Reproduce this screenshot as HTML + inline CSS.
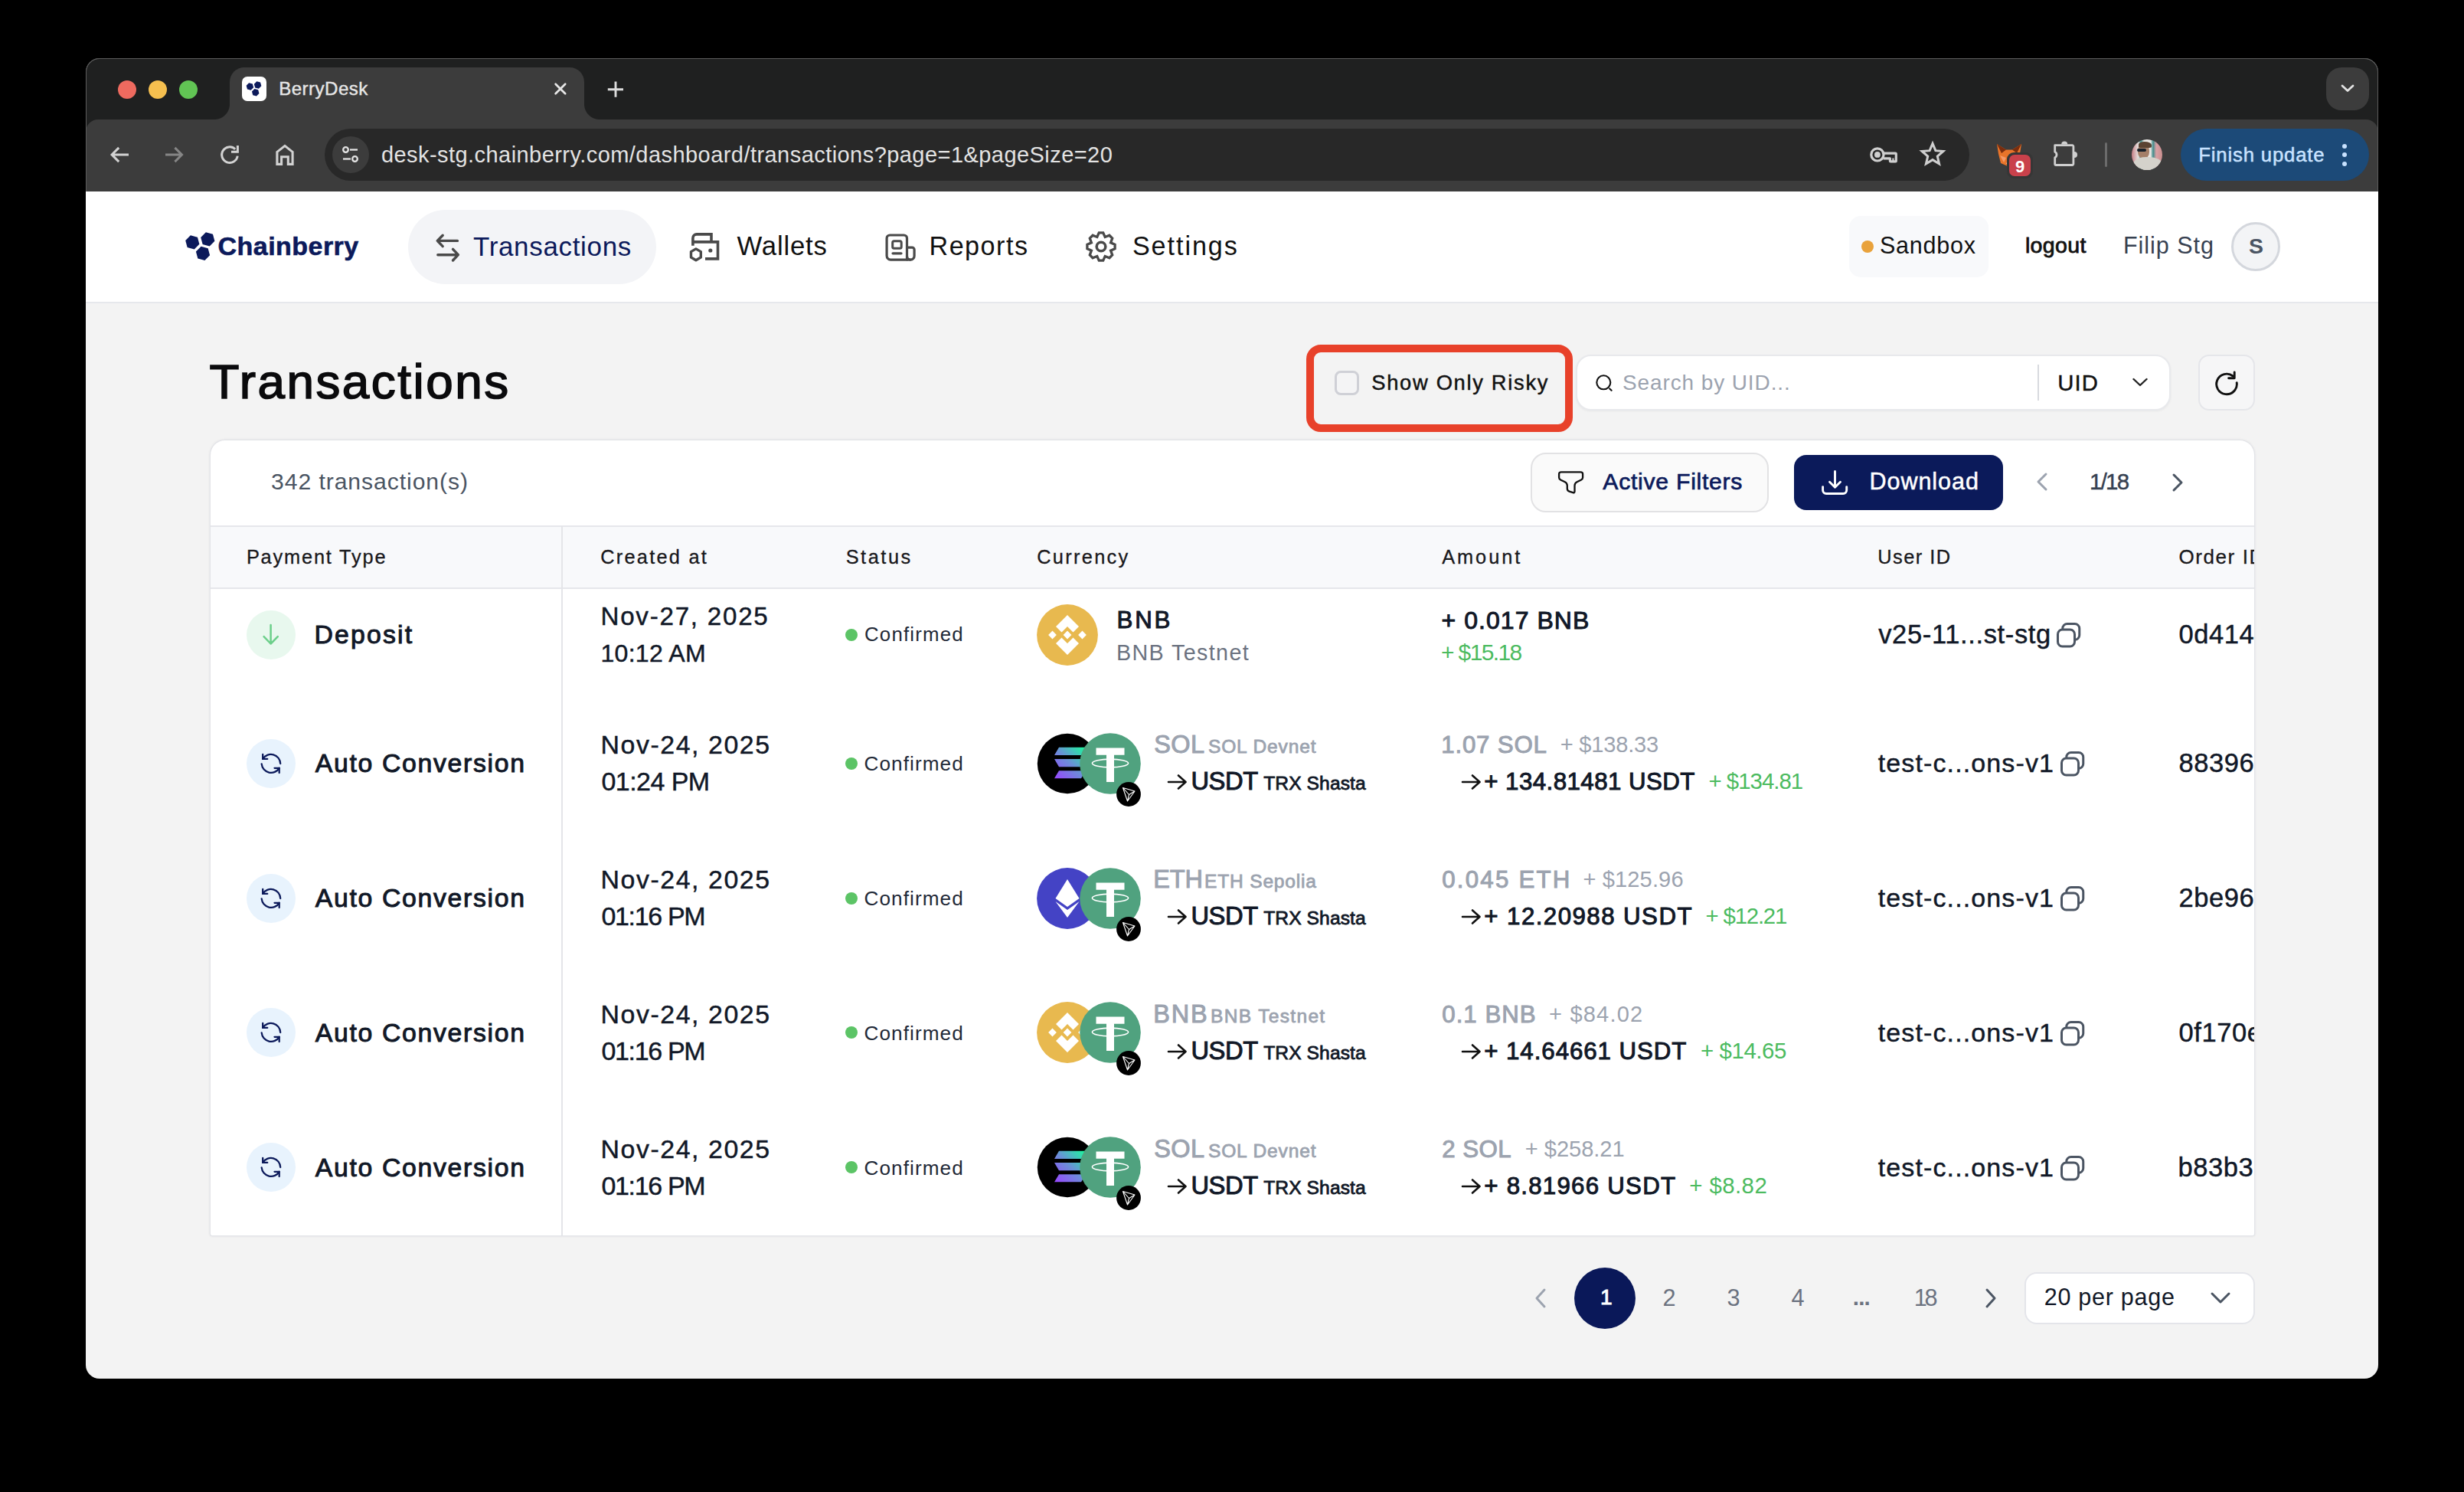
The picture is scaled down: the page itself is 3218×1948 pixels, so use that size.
<!DOCTYPE html>
<html><head><meta charset="utf-8">
<style>
html,body{margin:0;padding:0;}
body{width:3218px;height:1948px;background:#000;position:relative;overflow:hidden;font-family:"Liberation Sans",sans-serif;}
.t{position:absolute;white-space:nowrap;line-height:1;font-family:"Liberation Sans",sans-serif;}
svg{overflow:visible}
</style></head><body>
<div style="position:absolute;left:112px;top:76px;width:2994px;height:114px;background:#1f2020;border-radius:18px 18px 0 0;box-shadow:inset 0 1px 0 #4a4a4a,inset 1px 0 0 #3a3a3a,inset -1px 0 0 #3a3a3a"></div>
<div style="position:absolute;left:112px;top:156px;width:2994px;height:104px;background:#3c3c3c;border-radius:16px 16px 0 0"></div>
<div style="position:absolute;left:112px;top:250px;width:2994px;height:1550px;background:#f3f3f3;border-radius:0 0 18px 18px"></div>
<div style="position:absolute;left:112px;top:76px;width:2994px;height:174px;border:1.2px solid #5c5c5c;border-bottom:none;border-radius:18px 18px 0 0;box-sizing:border-box"></div>
<div style="position:absolute;left:300px;top:88px;width:463px;height:82px;background:#3c3c3c;border-radius:19px 19px 0 0"></div>
<div style="position:absolute;left:280px;top:136px;width:20px;height:20px;background:radial-gradient(circle at 0 0,#1f2020 19.5px,#3c3c3c 20.5px)"></div>
<div style="position:absolute;left:763px;top:136px;width:20px;height:20px;background:radial-gradient(circle at 100% 0,#1f2020 19.5px,#3c3c3c 20.5px)"></div>
<div style="position:absolute;left:153.8px;top:104.8px;width:24.399999999999977px;height:24.39999999999999px;background:#ee6a5f;border-radius:50%"></div>
<div style="position:absolute;left:193.8px;top:104.8px;width:24.399999999999977px;height:24.39999999999999px;background:#f5bf4f;border-radius:50%"></div>
<div style="position:absolute;left:233.8px;top:104.8px;width:24.399999999999977px;height:24.39999999999999px;background:#61c454;border-radius:50%"></div>
<div style="position:absolute;left:316px;top:100px;width:32px;height:32px;background:#fff;border-radius:7px"></div>
<svg style="position:absolute;left:316px;top:100px;" width="32" height="32" viewBox="0 0 32 32"><polygon points="15.13,14.27 11.67,17.73 6.94,16.46 5.67,11.73 9.13,8.27 13.86,9.54" fill="#0c1a5b"/><polygon points="25.33,12.27 21.87,15.73 17.14,14.46 15.87,9.73 19.33,6.27 24.06,7.54" fill="#0c1a5b"/><polygon points="22.43,22.07 18.97,25.53 14.24,24.26 12.97,19.53 16.43,16.07 21.16,17.34" fill="#0c1a5b"/></svg>
<svg style="position:absolute;left:722px;top:106px;" width="20" height="20" viewBox="0 0 20 20"><path d="M3.6 3.7 L16.2 16.3 M16.2 3.7 L3.6 16.3" stroke="#e6e6e6" stroke-width="2.7" stroke-linecap="round"/></svg>
<svg style="position:absolute;left:793px;top:105.5px;" width="22" height="22" viewBox="0 0 22 22"><path d="M11 0.6 V20.8 M0.8 10.7 H21" stroke="#dcdcdc" stroke-width="2.9"/></svg>
<div style="position:absolute;left:3038px;top:88px;width:55.69999999999982px;height:55.80000000000001px;background:#3c3c3c;border-radius:20px"></div>
<svg style="position:absolute;left:3056px;top:108px;" width="20" height="14" viewBox="0 0 20 14"><path d="M3 4 L10 10.5 L17 4" stroke="#e3e3e3" stroke-width="2.8" fill="none" stroke-linecap="round" stroke-linejoin="round"/></svg>
<svg style="position:absolute;left:142px;top:188px;" width="28" height="28" viewBox="0 0 28 28"><path d="M4.6 14 H26 M13.2 4.9 L4.1 14 L13.2 23.1" stroke="#d2d2d2" stroke-width="3" fill="none" stroke-linecap="butt" stroke-linejoin="miter"/></svg>
<svg style="position:absolute;left:214px;top:188px;" width="28" height="28" viewBox="0 0 28 28"><path d="M2 14 H23.2 M14.4 4.9 L23.5 14 L14.4 23.1" stroke="#868686" stroke-width="3" fill="none" stroke-linecap="butt" stroke-linejoin="miter"/></svg>
<svg style="position:absolute;left:286px;top:188px;" width="28" height="28" viewBox="0 0 28 28"><path d="M21.2 6.8 A10.3 10.3 0 1 0 24.2 15.6" stroke="#d2d2d2" stroke-width="3" fill="none"/><path d="M24.4 1.9 V10.2 H16" stroke="#d2d2d2" stroke-width="3" fill="none"/></svg>
<svg style="position:absolute;left:358px;top:187px;" width="28" height="30" viewBox="0 0 28 30"><path d="M3.9 27.4 V11.4 L14 3.4 L24.1 11.4 V27.4 H18.3 V17.8 H9.6 V27.4 Z" stroke="#d2d2d2" stroke-width="3.1" fill="none" stroke-linejoin="miter"/></svg>
<div style="position:absolute;left:424px;top:168px;width:2148px;height:68px;background:#282828;border-radius:34px"></div>
<div style="position:absolute;left:434px;top:178px;width:48px;height:48px;background:#3c3c3c;border-radius:50%"></div>
<svg style="position:absolute;left:444px;top:188px;" width="28" height="28" viewBox="0 0 28 28"><circle cx="7.5" cy="7.5" r="3.3" stroke="#e3e3e3" stroke-width="2.3" fill="none"/><path d="M13 7.5 H23" stroke="#e3e3e3" stroke-width="2.3"/><circle cx="19.5" cy="19.5" r="3.3" stroke="#e3e3e3" stroke-width="2.3" fill="none"/><path d="M4 19.5 H14" stroke="#e3e3e3" stroke-width="2.3"/></svg>
<svg style="position:absolute;left:2440px;top:190px;" width="40" height="26" viewBox="0 0 40 26"><circle cx="11.9" cy="11.9" r="8.1" stroke="#cfcfcf" stroke-width="3.2" fill="none"/><circle cx="11.9" cy="11.9" r="3.9" fill="#cfcfcf"/><path d="M19.6 10.1 H35.4 Q36.3 10.1 36.3 11 V19.9 Q36.3 20.8 35.4 20.8 H29.3 Q28.4 20.8 28.4 19.9 V16.8 H19.6" stroke="#cfcfcf" stroke-width="3.2" fill="none" stroke-linejoin="round"/><path d="M32.4 16.5 V20" stroke="#cfcfcf" stroke-width="2.2"/></svg>
<svg style="position:absolute;left:2506px;top:184.6px;" width="36" height="34" viewBox="0 0 36 34"><polygon points="18.00,2.40 21.88,11.66 31.89,12.49 24.28,19.04 26.58,28.81 18.00,23.60 9.42,28.81 11.72,19.04 4.11,12.49 14.12,11.66" stroke="#cfcfcf" stroke-width="3" fill="none" stroke-linejoin="miter"/></svg>
<svg style="position:absolute;left:2606px;top:186px;" width="36" height="32" viewBox="0 0 36 32"><path d="M2 2 L14 9.5 L22 9.5 L34 2 L32 15 L29 27 L20 31 L16 31 L7 27 L4 15 Z" fill="#e8742a"/><path d="M2 2 L14 9.5 L8 14 Z M34 2 L22 9.5 L28 14 Z" fill="#7a2d0e"/><path d="M6 17 L14 20 L11 26 Z M30 17 L22 20 L25 26 Z" fill="#f59a6a"/><path d="M14 27 L18 31 L22 27 L18 25Z" fill="#e6e6e6"/></svg>
<div style="position:absolute;left:2621.4px;top:198.8px;width:33.59999999999991px;height:34.0px;background:#363636;border-radius:9px"></div>
<div style="position:absolute;left:2624.4px;top:201.8px;width:27.59999999999991px;height:28.0px;background:#c9414b;border-radius:7px"></div>
<svg style="position:absolute;left:2678px;top:180px;" width="40" height="40" viewBox="0 0 40 40"><path d="M5.7 9.7 H28.4 A1.5 1.5 0 0 1 29.9 11.2 V34 A1.5 1.5 0 0 1 28.4 35.5 H7.2 A1.5 1.5 0 0 1 5.7 34 V25.8 A4.3 4.3 0 0 0 5.7 18.2 Z" stroke="#cfcfcf" stroke-width="2.8" fill="none" stroke-linejoin="round"/><path d="M14.2 8.5 A4 4 0 0 1 22.2 8.5 Z" fill="#cfcfcf"/><path d="M31 18 A4 4 0 0 1 31 26 Z" fill="#cfcfcf"/></svg>
<div style="position:absolute;left:2748.5px;top:186px;width:3.0px;height:32px;background:#6b6b6b;border-radius:2px"></div>
<div style="position:absolute;left:2784px;top:182px;width:40px;height:40px;border-radius:50%;overflow:hidden;background:linear-gradient(90deg,#c77f86 0,#e8e4e2 22%,#3f8c8a 30%,#e9e6e3 40%,#e9e6e3 62%,#3f8c8a 70%,#d9a0a4 80%,#c98f8f 100%)"><div style="position:absolute;left:8px;top:6px;width:15px;height:19px;border-radius:45%;background:#a47f68"></div><div style="position:absolute;left:9px;top:3px;width:17px;height:8px;border-radius:50% 60% 20% 20%;background:#5b4332"></div><div style="position:absolute;left:7px;top:12px;width:12px;height:4px;border-radius:2px;background:#17202a"></div><div style="position:absolute;left:2px;top:23px;width:38px;height:20px;border-radius:45% 45% 0 0;background:#d4d2cb"></div></div>
<div style="position:absolute;left:2848px;top:168px;width:245.5px;height:67.5px;background:#1c4a78;border-radius:34px"></div>
<div style="position:absolute;left:3059px;top:187.6px;width:6px;height:6.0px;background:#c8e2ff;border-radius:50%"></div>
<div style="position:absolute;left:3059px;top:199.4px;width:6px;height:6.0px;background:#c8e2ff;border-radius:50%"></div>
<div style="position:absolute;left:3059px;top:211px;width:6px;height:6px;background:#c8e2ff;border-radius:50%"></div>
<div style="position:absolute;left:112px;top:250px;width:2994px;height:144px;background:#fff"></div>
<div style="position:absolute;left:112px;top:394px;width:2994px;height:2px;background:#e6e8ec"></div>
<svg style="position:absolute;left:238px;top:300px;" width="46" height="44" viewBox="0 0 46 44"><polygon points="22.38,18.83 15.73,25.48 6.65,23.05 4.22,13.97 10.87,7.32 19.95,9.75" fill="#0c1a5b"/><polygon points="42.38,14.83 35.73,21.48 26.65,19.05 24.22,9.97 30.87,3.32 39.95,5.75" fill="#0c1a5b"/><polygon points="36.08,33.33 29.43,39.98 20.35,37.55 17.92,28.47 24.57,21.82 33.65,24.25" fill="#0c1a5b"/></svg>
<div style="position:absolute;left:532.8px;top:274px;width:323.80000000000007px;height:97px;background:#f3f4f7;border-radius:49px"></div>
<svg style="position:absolute;left:566px;top:304px;" width="38" height="40" viewBox="0 0 38 40"><path d="M5.5 10.4 H31.5 M12.2 3.2 L5.2 10.4 L12.2 17.6" stroke="#4a4a4a" stroke-width="3.4" fill="none" stroke-linecap="round" stroke-linejoin="round"/><path d="M5.8 28.7 H32 M25.5 21.4 L32.4 28.7 L25.5 36" stroke="#4a4a4a" stroke-width="3.4" fill="none" stroke-linecap="round" stroke-linejoin="round"/></svg>
<svg style="position:absolute;left:895px;top:298px;" width="50" height="50" viewBox="0 0 50 50"><path d="M9.9 22.8 V12.9 A5 5 0 0 1 14.9 7.9 H34 V17.9" stroke="#4a4a4a" stroke-width="3.6" fill="none"/><path d="M9.9 17.9 H42.5 V39.9 H26" stroke="#4a4a4a" stroke-width="3.6" fill="none"/><circle cx="32.8" cy="29" r="2.6" fill="#4a4a4a"/><polygon points="13.90,26.90 20.31,30.60 20.31,38.00 13.90,41.70 7.49,38.00 7.49,30.60" stroke="#4a4a4a" stroke-width="3.4" fill="none" stroke-linejoin="round"/></svg>
<svg style="position:absolute;left:1150px;top:298px;" width="50" height="50" viewBox="0 0 50 50"><path d="M34.5 41.1 H13.1 A5 5 0 0 1 8.1 36.1 V13 A4 4 0 0 1 12.1 9 H30.5 A4 4 0 0 1 34.5 13 Z" stroke="#4a4a4a" stroke-width="3.2" fill="none" stroke-linejoin="round"/><path d="M34.5 25.1 H41.1 A3 3 0 0 1 44.1 28.1 V36.3 A4.8 4.8 0 0 1 39.3 41.1 A4.8 4.8 0 0 1 34.5 36.3" stroke="#4a4a4a" stroke-width="3.2" fill="none" stroke-linejoin="round"/><rect x="15.7" y="16.8" width="11.5" height="9.4" rx="2" stroke="#4a4a4a" stroke-width="3" fill="none"/><path d="M16 32.8 H27" stroke="#4a4a4a" stroke-width="3.2" stroke-linecap="round"/><path d="M34 41.1 H39.5" stroke="#4a4a4a" stroke-width="3.2"/></svg>
<svg style="position:absolute;left:1410px;top:295px;" width="60" height="55" viewBox="0 0 60 55"><polygon points="25.30,8.90 30.70,8.90 33.20,14.44 38.89,12.29 42.71,16.11 40.56,21.80 46.10,24.30 46.10,29.70 40.56,32.20 42.71,37.89 38.89,41.71 33.20,39.56 30.70,45.10 25.30,45.10 22.80,39.56 17.11,41.71 13.29,37.89 15.44,32.20 9.90,29.70 9.90,24.30 15.44,21.80 13.29,16.11 17.11,12.29 22.80,14.44" stroke="#4a4a4a" stroke-width="3.3" fill="none" stroke-linejoin="miter" stroke-miterlimit="3"/><circle cx="28" cy="27" r="5.8" stroke="#4a4a4a" stroke-width="3.6" fill="none"/></svg>
<div style="position:absolute;left:2415px;top:282px;width:182px;height:80px;background:#f8f9fb;border-radius:15px"></div>
<div style="position:absolute;left:2431px;top:314px;width:16px;height:16px;background:#e9a23b;border-radius:50%"></div>
<div style="position:absolute;left:2914px;top:290px;width:64px;height:64px;background:#f3f4f6;border:3px solid #d4d7dd;border-radius:50%;box-sizing:border-box"></div>
<div style="position:absolute;left:1706.25px;top:449.5px;width:347.75px;height:114.0px;border:10.5px solid #e8412a;border-radius:19px;box-sizing:border-box"></div>
<div style="position:absolute;left:1743px;top:484.25px;width:32px;height:31.5px;border:3px solid #cfd0d6;border-radius:8px;box-sizing:border-box;background:#f4f4f5"></div>
<div style="position:absolute;left:2058px;top:462.5px;width:776.5px;height:73.20000000000005px;background:#fff;border:2px solid #e8e9ec;border-radius:20px;box-sizing:border-box;box-shadow:0 1px 3px rgba(0,0,0,0.05)"></div>
<svg style="position:absolute;left:2082px;top:487px;" width="26" height="26" viewBox="0 0 26 26"><circle cx="12.3" cy="12.3" r="9" stroke="#111" stroke-width="2.1" fill="none"/><path d="M20.2 20.4 L22.6 22.8" stroke="#111" stroke-width="2.1" stroke-linecap="round"/></svg>
<div style="position:absolute;left:2661px;top:476px;width:2px;height:47px;background:#d8dadf"></div>
<svg style="position:absolute;left:2784px;top:492px;" width="22" height="14" viewBox="0 0 22 14"><path d="M2.5 3 L11 11 L19.5 3" stroke="#222" stroke-width="2.4" fill="none" stroke-linecap="round" stroke-linejoin="round"/></svg>
<div style="position:absolute;left:2870.5px;top:462.5px;width:74.5px;height:73.20000000000005px;background:#f6f6f7;border:2px solid #e5e6ea;border-radius:14px;box-sizing:border-box"></div>
<svg style="position:absolute;left:2889.6px;top:482.8px;" width="36" height="36" viewBox="0 0 36 36"><path d="M26.2 8 A13.3 13.3 0 1 0 31.2 16.7" stroke="#111" stroke-width="2.9" fill="none" stroke-linecap="round"/><path d="M28.2 3 V10.8 H20.6" stroke="#111" stroke-width="2.9" fill="none" stroke-linecap="round" stroke-linejoin="round"/></svg>
<div style="position:absolute;left:274.5px;top:574.5px;width:2669.5px;height:1038.5px;background:#fff;border-radius:19px 19px 2px 2px;box-shadow:0 0 0 1.2px #e3e4e8,0 0 3.5px 1px rgba(20,20,40,0.07)"></div>
<div style="position:absolute;left:1998.6px;top:590.7px;width:311.4000000000001px;height:78.69999999999993px;background:#fafafa;border:2px solid #e2e2e4;border-radius:20px;box-sizing:border-box"></div>
<svg style="position:absolute;left:2025px;top:605px;" width="50" height="50" viewBox="0 0 50 50"><path d="M11.1 14 Q11.1 11.4 13.9 11.4 H39.3 Q42.1 11.4 42.1 14 V18.6 Q42.1 20.5 40.1 21.5 L34.5 24.3 Q31.5 25.9 31.5 29 V36.4 Q31.5 38.9 29.3 38.2 L24.5 36.6 Q21.8 35.7 21.8 33 V29 Q21.8 25.9 18.8 24.3 L13.1 21.5 Q11.1 20.5 11.1 18.6 Z" stroke="#111" stroke-width="2.3" fill="none" stroke-linejoin="round"/></svg>
<div style="position:absolute;left:2342.7px;top:594px;width:273.3000000000002px;height:71.5px;background:#0b1a5a;border-radius:16px"></div>
<svg style="position:absolute;left:2377px;top:611px;" width="38" height="38" viewBox="0 0 38 38"><path d="M19.5 4.4 V25 M12.5 18.3 L19.5 25.2 L26.5 18.3" stroke="#fff" stroke-width="2.9" fill="none" stroke-linecap="round" stroke-linejoin="round"/><path d="M3.6 24.6 V29 A4.5 4.5 0 0 0 8.1 33.5 H30.2 A4.5 4.5 0 0 0 34.7 29 V24.6" stroke="#fff" stroke-width="2.9" fill="none" stroke-linecap="round"/></svg>
<svg style="position:absolute;left:2656px;top:616px;" width="22" height="26" viewBox="0 0 22 26"><path d="M16 3 L6 13 L16 23" stroke="#9ca3af" stroke-width="3" fill="none" stroke-linecap="round" stroke-linejoin="round"/></svg>
<svg style="position:absolute;left:2833px;top:617px;" width="22" height="26" viewBox="0 0 22 26"><path d="M6 3 L16 13 L6 23" stroke="#4b5563" stroke-width="3" fill="none" stroke-linecap="round" stroke-linejoin="round"/></svg>
<div style="position:absolute;left:274.5px;top:686px;width:2669.5px;height:83px;background:#f8f9fb"></div>
<div style="position:absolute;left:274.5px;top:686px;width:2669.5px;height:2px;background:#e6e7eb"></div>
<div style="position:absolute;left:274.5px;top:767px;width:2669.5px;height:2px;background:#e6e7eb"></div>
<div style="position:absolute;left:733px;top:687px;width:2px;height:926px;background:#e4e5e9"></div>
<div style="position:absolute;left:322px;top:797px;width:64px;height:64px;background:#e8f8ee;border-radius:50%"></div>
<svg style="position:absolute;left:334px;top:809px;" width="40" height="40" viewBox="0 0 40 40"><path d="M19.6 7 V31.5 M10.6 22.2 L19.6 31.5 L28.8 22.2" stroke="#6ccf8a" stroke-width="2.5" fill="none" stroke-linecap="round" stroke-linejoin="round"/></svg>
<div style="position:absolute;left:322px;top:964.5px;width:64px;height:64.0px;background:#e8f3fd;border-radius:50%"></div>
<svg style="position:absolute;left:334px;top:976.5px;" width="40" height="40" viewBox="0 0 40 40"><path d="M9.2 13.9 A12.4 12.4 0 0 1 32.2 20" stroke="#0c1a5b" stroke-width="2.3" fill="none" stroke-linecap="round" stroke-linejoin="round"/><path d="M9.2 7.9 V13.9 H15.2" stroke="#0c1a5b" stroke-width="2.3" fill="none" stroke-linecap="round" stroke-linejoin="round"/><path d="M7.7 20.5 A12.4 12.4 0 0 0 30.7 25.8" stroke="#0c1a5b" stroke-width="2.3" fill="none" stroke-linecap="round" stroke-linejoin="round"/><path d="M24.5 25.8 H30.7 V32" stroke="#0c1a5b" stroke-width="2.3" fill="none" stroke-linecap="round" stroke-linejoin="round"/></svg>
<div style="position:absolute;left:322px;top:1140.5px;width:64px;height:64.0px;background:#e8f3fd;border-radius:50%"></div>
<svg style="position:absolute;left:334px;top:1152.5px;" width="40" height="40" viewBox="0 0 40 40"><path d="M9.2 13.9 A12.4 12.4 0 0 1 32.2 20" stroke="#0c1a5b" stroke-width="2.3" fill="none" stroke-linecap="round" stroke-linejoin="round"/><path d="M9.2 7.9 V13.9 H15.2" stroke="#0c1a5b" stroke-width="2.3" fill="none" stroke-linecap="round" stroke-linejoin="round"/><path d="M7.7 20.5 A12.4 12.4 0 0 0 30.7 25.8" stroke="#0c1a5b" stroke-width="2.3" fill="none" stroke-linecap="round" stroke-linejoin="round"/><path d="M24.5 25.8 H30.7 V32" stroke="#0c1a5b" stroke-width="2.3" fill="none" stroke-linecap="round" stroke-linejoin="round"/></svg>
<div style="position:absolute;left:322px;top:1316px;width:64px;height:64px;background:#e8f3fd;border-radius:50%"></div>
<svg style="position:absolute;left:334px;top:1328px;" width="40" height="40" viewBox="0 0 40 40"><path d="M9.2 13.9 A12.4 12.4 0 0 1 32.2 20" stroke="#0c1a5b" stroke-width="2.3" fill="none" stroke-linecap="round" stroke-linejoin="round"/><path d="M9.2 7.9 V13.9 H15.2" stroke="#0c1a5b" stroke-width="2.3" fill="none" stroke-linecap="round" stroke-linejoin="round"/><path d="M7.7 20.5 A12.4 12.4 0 0 0 30.7 25.8" stroke="#0c1a5b" stroke-width="2.3" fill="none" stroke-linecap="round" stroke-linejoin="round"/><path d="M24.5 25.8 H30.7 V32" stroke="#0c1a5b" stroke-width="2.3" fill="none" stroke-linecap="round" stroke-linejoin="round"/></svg>
<div style="position:absolute;left:322px;top:1492px;width:64px;height:64px;background:#e8f3fd;border-radius:50%"></div>
<svg style="position:absolute;left:334px;top:1504px;" width="40" height="40" viewBox="0 0 40 40"><path d="M9.2 13.9 A12.4 12.4 0 0 1 32.2 20" stroke="#0c1a5b" stroke-width="2.3" fill="none" stroke-linecap="round" stroke-linejoin="round"/><path d="M9.2 7.9 V13.9 H15.2" stroke="#0c1a5b" stroke-width="2.3" fill="none" stroke-linecap="round" stroke-linejoin="round"/><path d="M7.7 20.5 A12.4 12.4 0 0 0 30.7 25.8" stroke="#0c1a5b" stroke-width="2.3" fill="none" stroke-linecap="round" stroke-linejoin="round"/><path d="M24.5 25.8 H30.7 V32" stroke="#0c1a5b" stroke-width="2.3" fill="none" stroke-linecap="round" stroke-linejoin="round"/></svg>
<div style="position:absolute;left:1104px;top:821px;width:16px;height:16px;background:#5cc466;border-radius:50%"></div>
<div style="position:absolute;left:1104px;top:988.5px;width:16px;height:16.0px;background:#5cc466;border-radius:50%"></div>
<div style="position:absolute;left:1104px;top:1164.5px;width:16px;height:16.0px;background:#5cc466;border-radius:50%"></div>
<div style="position:absolute;left:1104px;top:1340px;width:16px;height:16px;background:#5cc466;border-radius:50%"></div>
<div style="position:absolute;left:1104px;top:1516px;width:16px;height:16px;background:#5cc466;border-radius:50%"></div>
<svg style="position:absolute;left:2686.25px;top:812.5px;" width="34" height="34" viewBox="0 0 34 34"><rect x="1.5" y="9" width="22" height="22" rx="6" stroke="#4b5563" stroke-width="3" fill="none"/><path d="M7.75 9 V7.5 A6 6 0 0 1 13.75 1.5 H23.75 A6 6 0 0 1 29.75 7.5 V16.25 A6 6 0 0 1 23.75 22.25 H23.5" stroke="#4b5563" stroke-width="3" fill="none"/></svg>
<svg style="position:absolute;left:2691.25px;top:981.25px;" width="34" height="34" viewBox="0 0 34 34"><rect x="1.5" y="9" width="22" height="22" rx="6" stroke="#4b5563" stroke-width="3" fill="none"/><path d="M7.75 9 V7.5 A6 6 0 0 1 13.75 1.5 H23.75 A6 6 0 0 1 29.75 7.5 V16.25 A6 6 0 0 1 23.75 22.25 H23.5" stroke="#4b5563" stroke-width="3" fill="none"/></svg>
<svg style="position:absolute;left:2691.25px;top:1157.25px;" width="34" height="34" viewBox="0 0 34 34"><rect x="1.5" y="9" width="22" height="22" rx="6" stroke="#4b5563" stroke-width="3" fill="none"/><path d="M7.75 9 V7.5 A6 6 0 0 1 13.75 1.5 H23.75 A6 6 0 0 1 29.75 7.5 V16.25 A6 6 0 0 1 23.75 22.25 H23.5" stroke="#4b5563" stroke-width="3" fill="none"/></svg>
<svg style="position:absolute;left:2691.25px;top:1333.25px;" width="34" height="34" viewBox="0 0 34 34"><rect x="1.5" y="9" width="22" height="22" rx="6" stroke="#4b5563" stroke-width="3" fill="none"/><path d="M7.75 9 V7.5 A6 6 0 0 1 13.75 1.5 H23.75 A6 6 0 0 1 29.75 7.5 V16.25 A6 6 0 0 1 23.75 22.25 H23.5" stroke="#4b5563" stroke-width="3" fill="none"/></svg>
<svg style="position:absolute;left:2691.25px;top:1509.25px;" width="34" height="34" viewBox="0 0 34 34"><rect x="1.5" y="9" width="22" height="22" rx="6" stroke="#4b5563" stroke-width="3" fill="none"/><path d="M7.75 9 V7.5 A6 6 0 0 1 13.75 1.5 H23.75 A6 6 0 0 1 29.75 7.5 V16.25 A6 6 0 0 1 23.75 22.25 H23.5" stroke="#4b5563" stroke-width="3" fill="none"/></svg>
<svg style="position:absolute;left:1354px;top:788.9px;" width="80" height="80" viewBox="0 0 80 80"><circle cx="40" cy="40" r="39.9" fill="#e8b94f"/><path d="M40 14 L55 29 L47.5 36.5 L40 29 L32.5 36.5 L25 29 Z" fill="#fff"/><path d="M40 66 L55 51 L47.5 43.5 L40 51 L32.5 43.5 L25 51 Z" fill="#fff"/><path d="M40 34.6 L45.4 40 L40 45.4 L34.6 40 Z M20.5 34.6 L25.9 40 L20.5 45.4 L15.1 40 Z M59.5 34.6 L64.9 40 L59.5 45.4 L54.1 40 Z" fill="#fff"/></svg>
<svg style="position:absolute;left:1354px;top:956.9px;" width="80" height="80" viewBox="0 0 80 80"><defs><linearGradient id="sg" x1="0" y1="1" x2="1" y2="0"><stop offset="0" stop-color="#9945ff"/><stop offset="0.5" stop-color="#6b8fd8"/><stop offset="1" stop-color="#19fb9b"/></linearGradient></defs><circle cx="40" cy="40" r="39.2" fill="#000"/><path d="M23 29 L29 18.8 H64 L58 29 Z M23 34 H58 L64 44.3 H29 Z M23 59.3 L29 49.2 H64 L58 59.3 Z" fill="url(#sg)"/></svg>
<svg style="position:absolute;left:1410.3px;top:956.8px;" width="80" height="80" viewBox="0 0 80 80"><circle cx="40" cy="40" r="39.8" fill="#50a27f"/><path d="M21.5 19.5 H58.5 V28.7 H45 V64 H35 V28.7 H21.5 Z" fill="#fff"/><ellipse cx="40" cy="39.5" rx="23.6" ry="5.4" stroke="#fff" stroke-width="1.6" fill="none"/></svg>
<svg style="position:absolute;left:1458px;top:1020.8px;" width="32" height="32" viewBox="0 0 32 32"><circle cx="16" cy="16" r="15.9" fill="#000"/><path d="M8.5 7.5 L24 12 L14.5 25 Z M8.5 7.5 L16.5 16.5 L24 12 M16.5 16.5 L14.5 25" stroke="#fff" stroke-width="1.1" fill="none" stroke-linejoin="round"/></svg>
<svg style="position:absolute;left:1354px;top:1132.9px;" width="80" height="80" viewBox="0 0 80 80"><circle cx="40" cy="40" r="39.9" fill="#4443c5"/><path d="M40 15 L24.5 40 L40 51 L55.5 40 Z" fill="#fff"/><path d="M24.5 44 L40 55 L55.5 44 L40 65 Z" fill="#fff"/></svg>
<svg style="position:absolute;left:1410.3px;top:1132.8px;" width="80" height="80" viewBox="0 0 80 80"><circle cx="40" cy="40" r="39.8" fill="#50a27f"/><path d="M21.5 19.5 H58.5 V28.7 H45 V64 H35 V28.7 H21.5 Z" fill="#fff"/><ellipse cx="40" cy="39.5" rx="23.6" ry="5.4" stroke="#fff" stroke-width="1.6" fill="none"/></svg>
<svg style="position:absolute;left:1458px;top:1196.8px;" width="32" height="32" viewBox="0 0 32 32"><circle cx="16" cy="16" r="15.9" fill="#000"/><path d="M8.5 7.5 L24 12 L14.5 25 Z M8.5 7.5 L16.5 16.5 L24 12 M16.5 16.5 L14.5 25" stroke="#fff" stroke-width="1.1" fill="none" stroke-linejoin="round"/></svg>
<svg style="position:absolute;left:1354px;top:1308.4px;" width="80" height="80" viewBox="0 0 80 80"><circle cx="40" cy="40" r="39.9" fill="#e8b94f"/><path d="M40 14 L55 29 L47.5 36.5 L40 29 L32.5 36.5 L25 29 Z" fill="#fff"/><path d="M40 66 L55 51 L47.5 43.5 L40 51 L32.5 43.5 L25 51 Z" fill="#fff"/><path d="M40 34.6 L45.4 40 L40 45.4 L34.6 40 Z M20.5 34.6 L25.9 40 L20.5 45.4 L15.1 40 Z M59.5 34.6 L64.9 40 L59.5 45.4 L54.1 40 Z" fill="#fff"/></svg>
<svg style="position:absolute;left:1410.3px;top:1308.3px;" width="80" height="80" viewBox="0 0 80 80"><circle cx="40" cy="40" r="39.8" fill="#50a27f"/><path d="M21.5 19.5 H58.5 V28.7 H45 V64 H35 V28.7 H21.5 Z" fill="#fff"/><ellipse cx="40" cy="39.5" rx="23.6" ry="5.4" stroke="#fff" stroke-width="1.6" fill="none"/></svg>
<svg style="position:absolute;left:1458px;top:1372.3px;" width="32" height="32" viewBox="0 0 32 32"><circle cx="16" cy="16" r="15.9" fill="#000"/><path d="M8.5 7.5 L24 12 L14.5 25 Z M8.5 7.5 L16.5 16.5 L24 12 M16.5 16.5 L14.5 25" stroke="#fff" stroke-width="1.1" fill="none" stroke-linejoin="round"/></svg>
<svg style="position:absolute;left:1354px;top:1484.4px;" width="80" height="80" viewBox="0 0 80 80"><defs><linearGradient id="sg" x1="0" y1="1" x2="1" y2="0"><stop offset="0" stop-color="#9945ff"/><stop offset="0.5" stop-color="#6b8fd8"/><stop offset="1" stop-color="#19fb9b"/></linearGradient></defs><circle cx="40" cy="40" r="39.2" fill="#000"/><path d="M23 29 L29 18.8 H64 L58 29 Z M23 34 H58 L64 44.3 H29 Z M23 59.3 L29 49.2 H64 L58 59.3 Z" fill="url(#sg)"/></svg>
<svg style="position:absolute;left:1410.3px;top:1484.3px;" width="80" height="80" viewBox="0 0 80 80"><circle cx="40" cy="40" r="39.8" fill="#50a27f"/><path d="M21.5 19.5 H58.5 V28.7 H45 V64 H35 V28.7 H21.5 Z" fill="#fff"/><ellipse cx="40" cy="39.5" rx="23.6" ry="5.4" stroke="#fff" stroke-width="1.6" fill="none"/></svg>
<svg style="position:absolute;left:1458px;top:1548.3px;" width="32" height="32" viewBox="0 0 32 32"><circle cx="16" cy="16" r="15.9" fill="#000"/><path d="M8.5 7.5 L24 12 L14.5 25 Z M8.5 7.5 L16.5 16.5 L24 12 M16.5 16.5 L14.5 25" stroke="#fff" stroke-width="1.1" fill="none" stroke-linejoin="round"/></svg>
<svg style="position:absolute;left:2002px;top:1681px;" width="22" height="28" viewBox="0 0 22 28"><path d="M15 3 L5 14 L15 25" stroke="#9ca3af" stroke-width="3" fill="none" stroke-linecap="round" stroke-linejoin="round"/></svg>
<div style="position:absolute;left:2056px;top:1655px;width:80px;height:80px;background:#0a1859;border-radius:50%"></div>
<svg style="position:absolute;left:2589px;top:1681px;" width="22" height="28" viewBox="0 0 22 28"><path d="M6 3 L16 14 L6 25" stroke="#4b5563" stroke-width="3" fill="none" stroke-linecap="round" stroke-linejoin="round"/></svg>
<div style="position:absolute;left:2644.2px;top:1661px;width:300.8000000000002px;height:67.5px;background:#fff;border:2px solid #e4e5ea;border-radius:16px;box-sizing:border-box"></div>
<svg style="position:absolute;left:2886px;top:1686px;" width="28" height="18" viewBox="0 0 28 18"><path d="M3 3 L14 14 L25 3" stroke="#4b5563" stroke-width="3" fill="none" stroke-linecap="round" stroke-linejoin="round"/></svg>
<svg style="position:absolute;left:1524px;top:1010px;" width="28" height="22" viewBox="0 0 28 22"><path d="M2 11 H24.5 M15 2.5 L24.5 11 L15 19.5" stroke="#111" stroke-width="2.6" fill="none" stroke-linecap="round" stroke-linejoin="round"/></svg>
<svg style="position:absolute;left:1908px;top:1010px;" width="28" height="22" viewBox="0 0 28 22"><path d="M2 11 H24.5 M15 2.5 L24.5 11 L15 19.5" stroke="#111" stroke-width="2.6" fill="none" stroke-linecap="round" stroke-linejoin="round"/></svg>
<svg style="position:absolute;left:1524px;top:1186px;" width="28" height="22" viewBox="0 0 28 22"><path d="M2 11 H24.5 M15 2.5 L24.5 11 L15 19.5" stroke="#111" stroke-width="2.6" fill="none" stroke-linecap="round" stroke-linejoin="round"/></svg>
<svg style="position:absolute;left:1908px;top:1186px;" width="28" height="22" viewBox="0 0 28 22"><path d="M2 11 H24.5 M15 2.5 L24.5 11 L15 19.5" stroke="#111" stroke-width="2.6" fill="none" stroke-linecap="round" stroke-linejoin="round"/></svg>
<svg style="position:absolute;left:1524px;top:1362px;" width="28" height="22" viewBox="0 0 28 22"><path d="M2 11 H24.5 M15 2.5 L24.5 11 L15 19.5" stroke="#111" stroke-width="2.6" fill="none" stroke-linecap="round" stroke-linejoin="round"/></svg>
<svg style="position:absolute;left:1908px;top:1362px;" width="28" height="22" viewBox="0 0 28 22"><path d="M2 11 H24.5 M15 2.5 L24.5 11 L15 19.5" stroke="#111" stroke-width="2.6" fill="none" stroke-linecap="round" stroke-linejoin="round"/></svg>
<svg style="position:absolute;left:1524px;top:1538px;" width="28" height="22" viewBox="0 0 28 22"><path d="M2 11 H24.5 M15 2.5 L24.5 11 L15 19.5" stroke="#111" stroke-width="2.6" fill="none" stroke-linecap="round" stroke-linejoin="round"/></svg>
<svg style="position:absolute;left:1908px;top:1538px;" width="28" height="22" viewBox="0 0 28 22"><path d="M2 11 H24.5 M15 2.5 L24.5 11 L15 19.5" stroke="#111" stroke-width="2.6" fill="none" stroke-linecap="round" stroke-linejoin="round"/></svg>
<div class="t" style="left:364.20px;top:104.00px;font-size:24.13px;font-weight:400;color:#e6e6e6;letter-spacing:0.445px;-webkit-text-stroke:0.4px #e6e6e6;">BerryDesk</div>
<div class="t" style="left:497.90px;top:188.00px;font-size:29px;font-weight:400;color:#e3e3e3;letter-spacing:0.445px;">desk-stg.chainberry.com/dashboard/transactions?page=1&amp;pageSize=20</div>
<div class="t" style="left:2871.25px;top:190.00px;font-size:25.73px;font-weight:400;color:#c8e2ff;letter-spacing:0.824px;-webkit-text-stroke:0.5px #c8e2ff;">Finish update</div>
<div class="t" style="left:2632.00px;top:207.00px;font-size:22px;font-weight:700;color:#fff;">9</div>
<div class="t" style="left:284.50px;top:304.00px;font-size:34.01px;font-weight:700;color:#0c1a5b;letter-spacing:0.468px;-webkit-text-stroke:0.6px #0c1a5b;">Chainberry</div>
<div class="t" style="left:617.90px;top:304.00px;font-size:35.03px;font-weight:400;color:#0c1a5b;letter-spacing:0.660px;">Transactions</div>
<div class="t" style="left:962.60px;top:304.00px;font-size:34.74px;font-weight:400;color:#111;letter-spacing:0.764px;">Wallets</div>
<div class="t" style="left:1213.50px;top:304.00px;font-size:34.16px;font-weight:400;color:#111;letter-spacing:1.480px;">Reports</div>
<div class="t" style="left:1478.90px;top:304.00px;font-size:34.16px;font-weight:400;color:#111;letter-spacing:1.937px;">Settings</div>
<div class="t" style="left:2455.00px;top:305.00px;font-size:30.52px;font-weight:400;color:#111;letter-spacing:0.748px;">Sandbox</div>
<div class="t" style="left:2644.90px;top:306.00px;font-size:28.5px;font-weight:400;color:#111;letter-spacing:0.393px;-webkit-text-stroke:0.8px #111;">logout</div>
<div class="t" style="left:2773.00px;top:305.00px;font-size:30.52px;font-weight:400;color:#374151;letter-spacing:0.967px;">Filip Stg</div>
<div class="t" style="left:2937.00px;top:307.00px;font-size:28.49px;font-weight:700;color:#4b5563;">S</div>
<div class="t" style="left:273.55px;top:467.00px;font-size:63.81px;font-weight:400;color:#0a0a0c;letter-spacing:2.519px;-webkit-text-stroke:1.6px #0a0a0c;">Transactions</div>
<div class="t" style="left:1791.22px;top:486.00px;font-size:27.33px;font-weight:400;color:#111;letter-spacing:1.691px;-webkit-text-stroke:0.45px #111;">Show Only Risky</div>
<div class="t" style="left:2119.00px;top:486.00px;font-size:27.98px;font-weight:400;color:#9ca3af;letter-spacing:0.906px;">Search by UID...</div>
<div class="t" style="left:2687.22px;top:485.00px;font-size:29.29px;font-weight:400;color:#111;letter-spacing:1.134px;-webkit-text-stroke:0.45px #111;">UID</div>
<div class="t" style="left:354.00px;top:614.00px;font-size:30.16px;font-weight:400;color:#4b5563;letter-spacing:0.922px;">342 transaction(s)</div>
<div class="t" style="left:2093.35px;top:614.00px;font-size:30.23px;font-weight:400;color:#0c1a5b;letter-spacing:0.705px;-webkit-text-stroke:0.7px #0c1a5b;">Active Filters</div>
<div class="t" style="left:2441.45px;top:613.00px;font-size:30.52px;font-weight:400;color:#fff;letter-spacing:0.966px;-webkit-text-stroke:0.5px #fff;">Download</div>
<div class="t" style="left:2729.12px;top:614.00px;font-size:29.43px;font-weight:400;color:#374151;letter-spacing:-1.783px;-webkit-text-stroke:0.45px #374151;">1/18</div>
<div class="t" style="left:321.90px;top:715.00px;font-size:25.36px;font-weight:400;color:#18181b;letter-spacing:1.814px;-webkit-text-stroke:0.3px #18181b;">Payment Type</div>
<div class="t" style="left:784.15px;top:715.00px;font-size:25.36px;font-weight:400;color:#18181b;letter-spacing:2.259px;-webkit-text-stroke:0.3px #18181b;">Created at</div>
<div class="t" style="left:1104.65px;top:715.00px;font-size:25.36px;font-weight:400;color:#18181b;letter-spacing:2.547px;-webkit-text-stroke:0.3px #18181b;">Status</div>
<div class="t" style="left:1354.15px;top:715.00px;font-size:25.36px;font-weight:400;color:#18181b;letter-spacing:2.322px;-webkit-text-stroke:0.3px #18181b;">Currency</div>
<div class="t" style="left:1883.15px;top:715.00px;font-size:25.36px;font-weight:400;color:#18181b;letter-spacing:2.970px;-webkit-text-stroke:0.3px #18181b;">Amount</div>
<div class="t" style="left:2452.15px;top:715.00px;font-size:25.36px;font-weight:400;color:#18181b;letter-spacing:1.511px;-webkit-text-stroke:0.3px #18181b;">User ID</div>
<div style="position:absolute;left:2790px;top:0;width:154px;height:1948px;overflow:hidden"><div class="t" style="left:55.40px;top:714.00px;font-size:26px;font-weight:400;color:#18181b;letter-spacing:1.600px;-webkit-text-stroke:0.3px #18181b;">Order ID</div></div>
<div class="t" style="left:410.50px;top:812.00px;font-size:33.79px;font-weight:400;color:#111827;letter-spacing:2.183px;-webkit-text-stroke:1.0px #111827;">Deposit</div>
<div class="t" style="left:784.48px;top:788.00px;font-size:33.14px;font-weight:400;color:#111827;letter-spacing:1.768px;-webkit-text-stroke:0.45px #111827;">Nov-27, 2025</div>
<div class="t" style="left:784.48px;top:837.00px;font-size:32.05px;font-weight:400;color:#111827;letter-spacing:0.261px;-webkit-text-stroke:0.45px #111827;">10:12 AM</div>
<div class="t" style="left:1129.00px;top:816.00px;font-size:25.8px;font-weight:400;color:#1f2937;letter-spacing:1.200px;">Confirmed</div>
<div class="t" style="left:1458.50px;top:794.00px;font-size:31.25px;font-weight:400;color:#111827;letter-spacing:2.794px;-webkit-text-stroke:1.0px #111827;">BNB</div>
<div class="t" style="left:1458.00px;top:838.00px;font-size:28.71px;font-weight:400;color:#6b7280;letter-spacing:1.369px;">BNB Testnet</div>
<div class="t" style="left:1882.50px;top:794.00px;font-size:31.98px;font-weight:400;color:#111827;letter-spacing:1.066px;-webkit-text-stroke:1.0px #111827;">+ 0.017 BNB</div>
<div class="t" style="left:1882.00px;top:837.00px;font-size:30px;font-weight:400;color:#4cbb5f;letter-spacing:-1.633px;">+ $15.18</div>
<div class="t" style="left:2453.22px;top:811.00px;font-size:34.5px;font-weight:400;color:#111827;letter-spacing:0.640px;-webkit-text-stroke:0.45px #111827;">v25-11...st-stg</div>
<div style="position:absolute;left:2790px;top:0;width:154px;height:1948px;overflow:hidden"><div class="t" style="left:55.47px;top:811.00px;font-size:34.5px;font-weight:400;color:#111827;letter-spacing:0.600px;-webkit-text-stroke:0.45px #111827;">0d4149a2</div></div>
<div class="t" style="left:411.75px;top:980.00px;font-size:33.79px;font-weight:400;color:#111827;letter-spacing:1.681px;-webkit-text-stroke:1.0px #111827;">Auto Conversion</div>
<div class="t" style="left:784.48px;top:956.00px;font-size:33.87px;font-weight:400;color:#111827;letter-spacing:1.577px;-webkit-text-stroke:0.45px #111827;">Nov-24, 2025</div>
<div class="t" style="left:785.48px;top:1003.00px;font-size:34px;font-weight:400;color:#111827;letter-spacing:-0.558px;-webkit-text-stroke:0.45px #111827;">01:24 PM</div>
<div class="t" style="left:1128.50px;top:984.00px;font-size:26.16px;font-weight:400;color:#1f2937;letter-spacing:1.080px;">Confirmed</div>
<div class="t" style="left:1507.25px;top:956.00px;font-size:32.49px;font-weight:400;color:#9ca3af;letter-spacing:0.408px;-webkit-text-stroke:1.0px #9ca3af;">SOL</div>
<div class="t" style="left:1577.90px;top:963.00px;font-size:24.56px;font-weight:400;color:#9ca3af;letter-spacing:0.867px;-webkit-text-stroke:0.8px #9ca3af;">SOL Devnet</div>
<div class="t" style="left:1555.40px;top:1004.00px;font-size:32.7px;font-weight:400;color:#111827;letter-spacing:-0.388px;-webkit-text-stroke:1.0px #111827;">USDT</div>
<div class="t" style="left:1650.15px;top:1011.00px;font-size:24.64px;font-weight:400;color:#111827;letter-spacing:0.088px;-webkit-text-stroke:0.8px #111827;">TRX Shasta</div>
<div class="t" style="left:1882.25px;top:957.00px;font-size:31.25px;font-weight:400;color:#9ca3af;letter-spacing:0.799px;-webkit-text-stroke:1.0px #9ca3af;">1.07 SOL</div>
<div class="t" style="left:2037.75px;top:958.00px;font-size:29.07px;font-weight:400;color:#9ca3af;letter-spacing:-0.211px;">+ $138.33</div>
<div class="t" style="left:1938.25px;top:1005.00px;font-size:31.25px;font-weight:400;color:#111827;letter-spacing:0.446px;-webkit-text-stroke:1.0px #111827;">+ 134.81481 USDT</div>
<div class="t" style="left:2231.50px;top:1005.00px;font-size:29.43px;font-weight:400;color:#4cbb5f;letter-spacing:-1.012px;">+ $134.81</div>
<div class="t" style="left:2452.72px;top:979.00px;font-size:34px;font-weight:400;color:#111827;letter-spacing:1.121px;-webkit-text-stroke:0.45px #111827;">test-c...ons-v1</div>
<div style="position:absolute;left:2790px;top:0;width:154px;height:1948px;overflow:hidden"><div class="t" style="left:55.47px;top:979.00px;font-size:34.5px;font-weight:400;color:#111827;letter-spacing:0.600px;-webkit-text-stroke:0.45px #111827;">88396a1</div></div>
<div class="t" style="left:411.75px;top:1156.00px;font-size:33.79px;font-weight:400;color:#111827;letter-spacing:1.681px;-webkit-text-stroke:1.0px #111827;">Auto Conversion</div>
<div class="t" style="left:784.48px;top:1132.00px;font-size:33.87px;font-weight:400;color:#111827;letter-spacing:1.577px;-webkit-text-stroke:0.45px #111827;">Nov-24, 2025</div>
<div class="t" style="left:785.48px;top:1179.00px;font-size:34px;font-weight:400;color:#111827;letter-spacing:-1.344px;-webkit-text-stroke:0.45px #111827;">01:16 PM</div>
<div class="t" style="left:1128.50px;top:1160.00px;font-size:26.16px;font-weight:400;color:#1f2937;letter-spacing:1.080px;">Confirmed</div>
<div class="t" style="left:1506.25px;top:1132.00px;font-size:32.49px;font-weight:400;color:#9ca3af;letter-spacing:-0.180px;-webkit-text-stroke:1.0px #9ca3af;">ETH</div>
<div class="t" style="left:1573.10px;top:1139.00px;font-size:24.56px;font-weight:400;color:#9ca3af;letter-spacing:0.805px;-webkit-text-stroke:0.8px #9ca3af;">ETH Sepolia</div>
<div class="t" style="left:1555.40px;top:1180.00px;font-size:32.7px;font-weight:400;color:#111827;letter-spacing:-0.388px;-webkit-text-stroke:1.0px #111827;">USDT</div>
<div class="t" style="left:1650.15px;top:1187.00px;font-size:24.64px;font-weight:400;color:#111827;letter-spacing:0.088px;-webkit-text-stroke:0.8px #111827;">TRX Shasta</div>
<div class="t" style="left:1883.25px;top:1133.00px;font-size:31.25px;font-weight:400;color:#9ca3af;letter-spacing:2.217px;-webkit-text-stroke:1.0px #9ca3af;">0.045 ETH</div>
<div class="t" style="left:2067.40px;top:1134.00px;font-size:29.07px;font-weight:400;color:#9ca3af;letter-spacing:0.133px;">+ $125.96</div>
<div class="t" style="left:1938.25px;top:1181.00px;font-size:31.25px;font-weight:400;color:#111827;letter-spacing:1.444px;-webkit-text-stroke:1.0px #111827;">+ 12.20988 USDT</div>
<div class="t" style="left:2227.60px;top:1181.00px;font-size:29.43px;font-weight:400;color:#4cbb5f;letter-spacing:-1.226px;">+ $12.21</div>
<div class="t" style="left:2452.72px;top:1155.00px;font-size:34px;font-weight:400;color:#111827;letter-spacing:1.121px;-webkit-text-stroke:0.45px #111827;">test-c...ons-v1</div>
<div style="position:absolute;left:2790px;top:0;width:154px;height:1948px;overflow:hidden"><div class="t" style="left:55.47px;top:1155.00px;font-size:34.5px;font-weight:400;color:#111827;letter-spacing:0.600px;-webkit-text-stroke:0.45px #111827;">2be96f3</div></div>
<div class="t" style="left:411.75px;top:1332.00px;font-size:33.79px;font-weight:400;color:#111827;letter-spacing:1.681px;-webkit-text-stroke:1.0px #111827;">Auto Conversion</div>
<div class="t" style="left:784.48px;top:1308.00px;font-size:33.87px;font-weight:400;color:#111827;letter-spacing:1.577px;-webkit-text-stroke:0.45px #111827;">Nov-24, 2025</div>
<div class="t" style="left:785.48px;top:1355.00px;font-size:34px;font-weight:400;color:#111827;letter-spacing:-1.344px;-webkit-text-stroke:0.45px #111827;">01:16 PM</div>
<div class="t" style="left:1128.50px;top:1336.00px;font-size:26.16px;font-weight:400;color:#1f2937;letter-spacing:1.080px;">Confirmed</div>
<div class="t" style="left:1506.25px;top:1308.00px;font-size:32.49px;font-weight:400;color:#9ca3af;letter-spacing:1.862px;-webkit-text-stroke:1.0px #9ca3af;">BNB</div>
<div class="t" style="left:1581.10px;top:1315.00px;font-size:24.56px;font-weight:400;color:#9ca3af;letter-spacing:1.309px;-webkit-text-stroke:0.8px #9ca3af;">BNB Testnet</div>
<div class="t" style="left:1555.40px;top:1356.00px;font-size:32.7px;font-weight:400;color:#111827;letter-spacing:-0.388px;-webkit-text-stroke:1.0px #111827;">USDT</div>
<div class="t" style="left:1650.15px;top:1363.00px;font-size:24.64px;font-weight:400;color:#111827;letter-spacing:0.088px;-webkit-text-stroke:0.8px #111827;">TRX Shasta</div>
<div class="t" style="left:1883.25px;top:1309.00px;font-size:31.25px;font-weight:400;color:#9ca3af;letter-spacing:1.002px;-webkit-text-stroke:1.0px #9ca3af;">0.1 BNB</div>
<div class="t" style="left:2023.00px;top:1310.00px;font-size:29.07px;font-weight:400;color:#9ca3af;letter-spacing:1.175px;">+ $84.02</div>
<div class="t" style="left:1938.25px;top:1357.00px;font-size:31.25px;font-weight:400;color:#111827;letter-spacing:0.937px;-webkit-text-stroke:1.0px #111827;">+ 14.64661 USDT</div>
<div class="t" style="left:2221.00px;top:1357.00px;font-size:29.43px;font-weight:400;color:#4cbb5f;letter-spacing:-0.426px;">+ $14.65</div>
<div class="t" style="left:2452.72px;top:1331.00px;font-size:34px;font-weight:400;color:#111827;letter-spacing:1.121px;-webkit-text-stroke:0.45px #111827;">test-c...ons-v1</div>
<div style="position:absolute;left:2790px;top:0;width:154px;height:1948px;overflow:hidden"><div class="t" style="left:55.47px;top:1331.00px;font-size:34.5px;font-weight:400;color:#111827;letter-spacing:0.600px;-webkit-text-stroke:0.45px #111827;">0f170e5</div></div>
<div class="t" style="left:411.75px;top:1508.00px;font-size:33.79px;font-weight:400;color:#111827;letter-spacing:1.681px;-webkit-text-stroke:1.0px #111827;">Auto Conversion</div>
<div class="t" style="left:784.48px;top:1484.00px;font-size:33.87px;font-weight:400;color:#111827;letter-spacing:1.577px;-webkit-text-stroke:0.45px #111827;">Nov-24, 2025</div>
<div class="t" style="left:785.48px;top:1531.00px;font-size:34px;font-weight:400;color:#111827;letter-spacing:-1.344px;-webkit-text-stroke:0.45px #111827;">01:16 PM</div>
<div class="t" style="left:1128.50px;top:1512.00px;font-size:26.16px;font-weight:400;color:#1f2937;letter-spacing:1.080px;">Confirmed</div>
<div class="t" style="left:1507.25px;top:1484.00px;font-size:32.49px;font-weight:400;color:#9ca3af;letter-spacing:0.408px;-webkit-text-stroke:1.0px #9ca3af;">SOL</div>
<div class="t" style="left:1577.90px;top:1491.00px;font-size:24.56px;font-weight:400;color:#9ca3af;letter-spacing:0.867px;-webkit-text-stroke:0.8px #9ca3af;">SOL Devnet</div>
<div class="t" style="left:1555.40px;top:1532.00px;font-size:32.7px;font-weight:400;color:#111827;letter-spacing:-0.388px;-webkit-text-stroke:1.0px #111827;">USDT</div>
<div class="t" style="left:1650.15px;top:1539.00px;font-size:24.64px;font-weight:400;color:#111827;letter-spacing:0.088px;-webkit-text-stroke:0.8px #111827;">TRX Shasta</div>
<div class="t" style="left:1883.25px;top:1485.00px;font-size:31.25px;font-weight:400;color:#9ca3af;letter-spacing:0.434px;-webkit-text-stroke:1.0px #9ca3af;">2 SOL</div>
<div class="t" style="left:1991.80px;top:1486.00px;font-size:29.07px;font-weight:400;color:#9ca3af;letter-spacing:-0.030px;">+ $258.21</div>
<div class="t" style="left:1938.25px;top:1533.00px;font-size:31.25px;font-weight:400;color:#111827;letter-spacing:1.246px;-webkit-text-stroke:1.0px #111827;">+ 8.81966 USDT</div>
<div class="t" style="left:2206.20px;top:1533.00px;font-size:29.43px;font-weight:400;color:#4cbb5f;letter-spacing:0.430px;">+ $8.82</div>
<div class="t" style="left:2452.72px;top:1507.00px;font-size:34px;font-weight:400;color:#111827;letter-spacing:1.121px;-webkit-text-stroke:0.45px #111827;">test-c...ons-v1</div>
<div style="position:absolute;left:2790px;top:0;width:154px;height:1948px;overflow:hidden"><div class="t" style="left:54.47px;top:1507.00px;font-size:34.5px;font-weight:400;color:#111827;letter-spacing:0.600px;-webkit-text-stroke:0.45px #111827;">b83b3d0</div></div>
<div class="t" style="left:2090.10px;top:1680.00px;font-size:28.05px;font-weight:400;color:#fff;-webkit-text-stroke:1.0px #fff;">1</div>
<div class="t" style="left:2171.50px;top:1679.00px;font-size:30.67px;font-weight:400;color:#6b7280;">2</div>
<div class="t" style="left:2255.40px;top:1679.00px;font-size:30.67px;font-weight:400;color:#6b7280;">3</div>
<div class="t" style="left:2339.50px;top:1679.00px;font-size:30.67px;font-weight:400;color:#6b7280;">4</div>
<div class="t" style="left:2419.80px;top:1679.00px;font-size:29.5px;font-weight:700;color:#6b7280;letter-spacing:-0.796px;">...</div>
<div class="t" style="left:2499.70px;top:1679.00px;font-size:30.67px;font-weight:400;color:#6b7280;letter-spacing:-3.350px;">18</div>
<div class="t" style="left:2669.70px;top:1678.00px;font-size:30.52px;font-weight:400;color:#111827;letter-spacing:0.738px;">20 per page</div>
</body></html>
